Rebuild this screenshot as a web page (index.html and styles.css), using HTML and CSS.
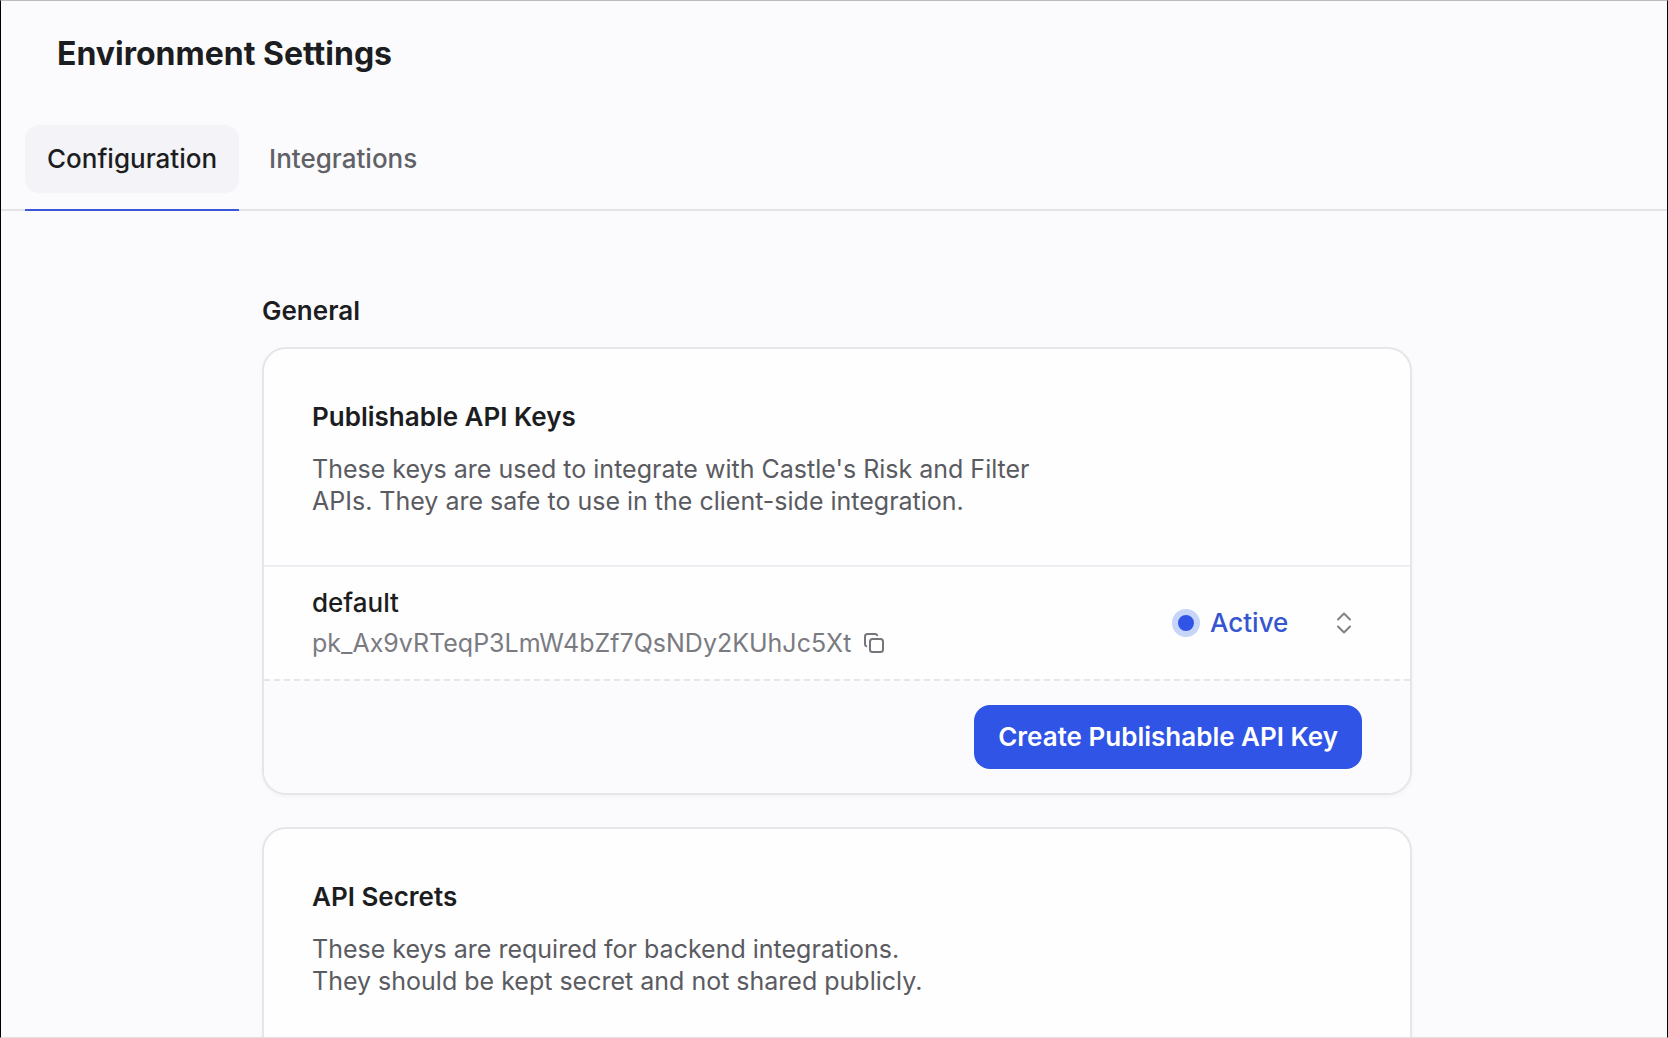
FILE: index.html
```html
<!DOCTYPE html>
<html lang="en">
<head>
  <meta charset="UTF-8" />
  <meta name="viewport" content="width=device-width, initial-scale=1" />
  <title>Environment Settings</title>
  <link rel="stylesheet" href="styles.css">
</head>
<body>
  <div class="app">
    <header>
      <h1>Environment Settings</h1>
      <nav class="tabs">
        <a class="tab active" href="#configuration" aria-current="page">Configuration</a>
        <a class="tab" href="#integrations">Integrations</a>
      </nav>
    </header>

    <main id="configuration">
      <h2>General</h2>

      <section class="card">
        <div class="card-intro">
          <h3>Publishable API Keys</h3>
          <p>These keys are used to integrate with Castle's Risk and Filter<br>APIs. They are safe to use in the client-side integration.</p>
        </div>

        <div class="key-row">
          <div class="key-info">
            <div class="key-name">default</div>
            <div class="key-value">
              <span>pk_Ax9vRTeqP3LmW4bZf7QsNDy2KUhJc5Xt</span>
              <button type="button" class="copy" aria-label="Copy key">
                <svg width="22" height="22" viewBox="0 0 22 22" fill="none" stroke="currentColor" stroke-width="2" stroke-linecap="round">
                  <rect x="7" y="7" width="13" height="13" rx="2.5" />
                  <path d="M3.2 14.2C2.4 13.8 2 13.2 2 12.2V4.5A2.5 2.5 0 0 1 4.5 2h7.7c1 0 1.6.4 2 1.2" />
                </svg>
              </button>
            </div>
          </div>

          <div class="status">
            <span class="dot"></span>
            <select aria-label="Key status">
              <option>Active</option>
              <option>Inactive</option>
            </select>
            <svg class="chevrons" width="36" height="24" viewBox="0 0 36 24" fill="none" stroke="currentColor" stroke-width="2" stroke-linecap="round" stroke-linejoin="round">
              <path d="M12 8.5l6-6 6 6M12 15.5l6 6 6-6" />
            </svg>
          </div>
        </div>

        <div class="card-footer">
          <button type="button" class="create">Create Publishable API Key</button>
        </div>
      </section>

      <section class="card">
        <div class="card-intro">
          <h3>API Secrets</h3>
          <p>These keys are required for backend integrations.<br>They should be kept secret and not shared publicly.</p>
        </div>
      </section>
    </main>
  </div>
</body>
</html>
```
FILE: styles.css
```css
* {
  box-sizing: border-box;
}

body {
  font-family: Inter, 'Liberation Sans', sans-serif;
  font-size: 25px;
  line-height: 32px;
  background: #fbfbfd;
  color: #1c1d21;
  margin: 0;
}

h1, h2, h3, p {
  margin: 0;
}

button, select {
  font: inherit;
  border: none;
  background: none;
  padding: 0;
  cursor: pointer;
}

.app {
  height: 100vh;
  overflow: hidden;
  border: 1px solid #000;
  border-top-color: #bcbcbf;
  border-bottom-color: #e2e2e4;
}

header {
  padding-top: 33px;
}

h1 {
  padding: 0 56px;
  font-size: 32px;
  line-height: 40px;
  font-weight: 700;
}

.tabs {
  display: flex;
  gap: 8px;
  margin-top: 51px;
  padding: 0 24px;
  border-bottom: 2px solid #e3e3e8;
}

.tab {
  position: relative;
  margin-bottom: 16px;
  padding: 18px 22px;
  border-radius: 14px;
  font-size: 26px;
  font-weight: 500;
  color: #606167;
  text-decoration: none;
}

.tab.active {
  background: #f4f4f8;
  color: #1c1d21;
}

/* sits on top of the header rule */
.tab.active::after {
  content: '';
  position: absolute;
  left: 0;
  right: 0;
  bottom: -18px;
  height: 2px;
  background: #3a57d6;
}

main {
  max-width: 1214px;
  margin: 0 auto;
  padding: 84px 29px 32px 35px;
}

h2, h3 {
  font-size: 26px;
  font-weight: 600;
}

h2 {
  margin-bottom: 20px;
}

.card {
  margin-bottom: 32px;
  border: 2px solid #e6e6ea;
  border-radius: 24px;
  background: #fefefe;
  box-shadow: 0 2px 4px rgba(20, 20, 40, 0.03);
  overflow: hidden;
}

.card:last-child {
  padding-bottom: 48px;
}

.card-intro {
  padding: 52px 48px 48px;
}

.card-intro p {
  margin-top: 20px;
  color: #5a5b61;
}

.key-row {
  display: flex;
  align-items: center;
  justify-content: space-between;
  padding: 20px 48px;
  border-top: 2px solid #eeeef2;
}

.key-name {
  margin-bottom: 8px;
  font-size: 26px;
  font-weight: 500;
}

.key-value {
  display: flex;
  align-items: center;
  gap: 12px;
  color: #7a7b81;
}

.copy {
  display: flex;
  color: #75767c;
}

.status {
  position: relative;
  display: flex;
  align-items: center;
  gap: 10px;
}

.dot {
  width: 28px;
  height: 28px;
  border: 6px solid #c6d5f8;
  border-radius: 50%;
  background: #2f54e6;
}

.status select {
  appearance: none;
  width: 152px;
  font-size: 26px;
  font-weight: 500;
  color: #3656cf;
}

.chevrons {
  position: absolute;
  right: 0;
  color: #808187;
  pointer-events: none;
}

.card-footer {
  display: flex;
  justify-content: flex-end;
  padding: 24px 48px;
  border-top: 2px dashed #e6e6ea;
  background: #fbfbfd;
}

.create {
  padding: 16px 24px;
  border-radius: 16px;
  background: #2f54e6;
  color: #fff;
  font-size: 26px;
  font-weight: 600;
}

.create:hover {
  background: #2748cc;
}
```
